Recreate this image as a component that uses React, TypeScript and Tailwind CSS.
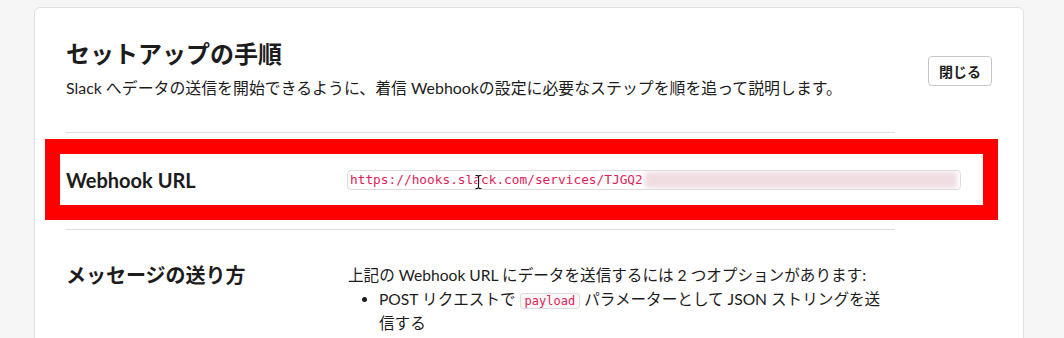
const sans = { fontFamily: 'Lato, "Noto Sans CJK JP", sans-serif' }
const mono = { fontFamily: '"DejaVu Sans Mono", "Liberation Mono", monospace' }

function IBeam() {
  const d = 'M1.5 1.5h2l1 1 1-1h2 M4.5 2.5v11 M1.5 14.5h2l1-1 1 1h2'
  return (
    <svg className="absolute left-[126px] top-[3px]" width="9" height="16" viewBox="0 0 9 16" fill="none">
      <path d={d} stroke="#fff" strokeWidth="2.6" strokeLinecap="round" />
      <path d={d} stroke="#111" strokeWidth="1.1" />
    </svg>
  )
}

export default function App() {
  return (
    <div className="w-[1064px] h-[338px] overflow-hidden bg-[#f6f6f6] pt-[7px] pl-[34px] text-[#1d1c1d]" style={sans}>
      <div className="w-[990px] h-[380px] bg-white border border-[#e0e0e0] rounded-[6px] px-[31px] pt-[30px]">
        {/* header */}
        <div className="flex items-start justify-between">
          <div>
            <h1 className="text-[24px] leading-[32px] font-bold">セットアップの手順</h1>
            <p className="mt-[7px] text-[15.9px] leading-[22px]">
              Slack へデータの送信を開始できるように、着信 Webhookの設定に必要なステップを順を追って説明します。
            </p>
          </div>
          <button className="mt-[18px] h-[30px] px-[10px] border border-[#c6c6c6] rounded-[4px] bg-white text-[14px] font-bold text-[#1d1c1d]">
            閉じる
          </button>
        </div>

        <div className="mt-[33px] w-[829px] h-px bg-[#dddddd]" />

        {/* webhook url row, highlighted */}
        <div className="mt-[6px] -ml-[21px] w-[953px] h-[81px] border-[15px] border-[#ff0000] flex items-center pl-[6px]">
          <div className="w-[281px] text-[20px] leading-[24px] font-bold">Webhook URL</div>
          <div className="relative w-[614px] h-[20px] border border-[#dcdcdc] rounded-[4px] bg-[#fdfdfd] flex items-center pl-[2px] overflow-hidden">
            <span className="text-[12.8px] leading-[18px] text-[#e01e5a] whitespace-nowrap" style={mono}>
              https://hooks.slack.com/services/TJGQ2
            </span>
            <span className="ml-[2px] w-[312px] h-[16px] bg-[#efdde2] blur-[2px] rounded-[3px]" />
            <IBeam />
          </div>
        </div>

        <div className="mt-[9px] w-[829px] h-px bg-[#dddddd]" />

        {/* how to send */}
        <div className="flex pt-[33px]">
          <div className="w-[282px] text-[20px] leading-[24px] font-bold">メッセージの送り方</div>
          <div className="w-[538px] text-[15.6px] leading-[24px]">
            <p>上記の Webhook URL にデータを送信するには 2 つオプションがあります:</p>
            <ul className="list-disc pl-[31px]">
              <li>
                POST リクエストで{' '}
                <code className="px-[4px] border border-[#dddddd] rounded-[3px] bg-[#f8f8f8] text-[12px] leading-[16px] text-[#e01e5a]" style={mono}>
                  payload
                </code>{' '}
                パラメーターとして JSON ストリングを送信する
              </li>
            </ul>
          </div>
        </div>
      </div>
    </div>
  )
}
